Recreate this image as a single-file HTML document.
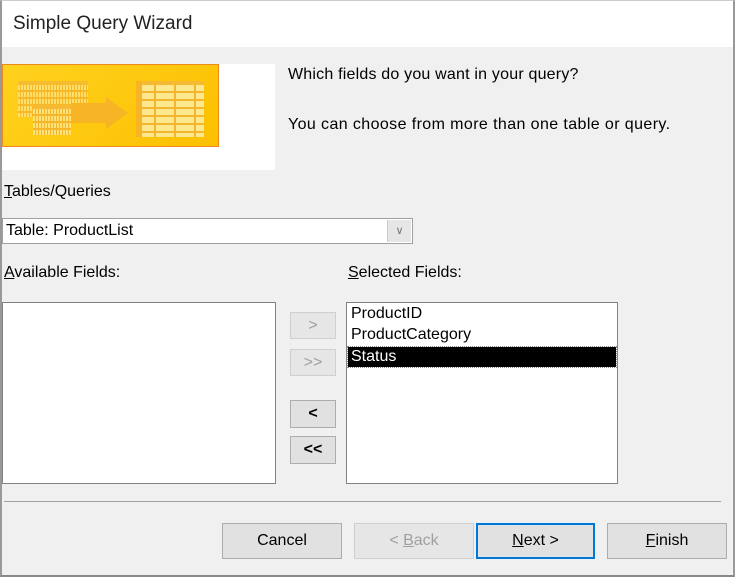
<!DOCTYPE html>
<html><head><meta charset="utf-8"><style>
*{box-sizing:border-box;margin:0;padding:0}
body{width:735px;height:577px;background:#f0f0f0;font-family:"Liberation Sans",sans-serif;font-size:16px;color:#000;position:relative;overflow:hidden}
.a{position:absolute}
.title{left:0;top:0;width:735px;height:47px;background:#fff;font-size:19px;padding:13px 0 0 13px;color:#222}
.frame{left:0;top:0;width:735px;height:577px;border-left:2px solid #999;border-right:2px solid #999;border-bottom:2px solid #888;border-top:1px solid #ccc}
.btn{background:#e1e1e1;border:1px solid #adadad;text-align:center;font-size:16px}
.dis{color:#a0a0a0;border-color:#cfcfcf;background:#e6e6e6}
.lb{background:#fff;border:1px solid #828282}
u{text-decoration:underline}
.tb{background:repeating-linear-gradient(90deg,transparent 0 2px,#f7b52a 2px 3px),repeating-linear-gradient(#fde27a 0 5px,#f7b52a 5px 7px);border-top:4px solid #f6b933}
</style></head><body>
<div class="a title">Simple Query Wizard</div>
<div class="a" style="left:2px;top:64px;width:273px;height:106px;background:#fff"></div>
<div class="a" style="left:2px;top:64px;width:217px;height:83px;background:linear-gradient(135deg,#ffd21f,#fbc000);border:1px solid #f08a1e;overflow:hidden">
 <div class="a tb" style="left:15px;top:16px;width:70px;height:36px;opacity:.85"></div>
 <div class="a tb" style="left:30px;top:40px;width:38px;height:30px"></div>
 <div class="a" style="left:68px;top:38px;width:36px;height:20px;background:#f7b424"></div>
 <div class="a" style="left:103px;top:32px;width:0;height:0;border-top:16px solid transparent;border-bottom:16px solid transparent;border-left:22px solid #f7b424"></div>
 <div class="a tb" style="left:133px;top:16px;width:68px;height:56px;background:repeating-linear-gradient(90deg,#fde890 0 18px,#f5b52c 18px 20px),#fde890;"></div>
 <div class="a" style="left:133px;top:20px;width:68px;height:52px;background:repeating-linear-gradient(transparent 0 6px,#f5b52c 6px 8px)"></div>
 <div class="a" style="left:133px;top:16px;width:6px;height:56px;background:#f7b424"></div>
</div>
<div class="a" style="left:288px;top:66px;letter-spacing:0.2px">Which fields do you want in your query?</div>
<div class="a" style="left:288px;top:116px;letter-spacing:0.4px">You can choose from more than one table or query.</div>
<div class="a" style="left:4px;top:183px"><u>T</u>ables/Queries</div>
<div class="a lb" style="left:2px;top:218px;width:411px;height:26px;border-color:#a0a0a0"><div class="a" style="left:3px;top:3px">Table: ProductList</div>
<div class="a" style="left:384px;top:1px;width:24px;height:22px;background:#e6e6e6;border-left:1px solid #ccc;color:#777;font-size:11px;text-align:center;line-height:22px">&#8744;</div></div>
<div class="a" style="left:4px;top:264px"><u>A</u>vailable Fields:</div>
<div class="a" style="left:348px;top:264px"><u>S</u>elected Fields:</div>
<div class="a lb" style="left:2px;top:302px;width:274px;height:182px"></div>
<div class="a lb" style="left:346px;top:302px;width:272px;height:182px">
 <div class="a" style="left:4px;top:2px">ProductID</div>
 <div class="a" style="left:4px;top:23px">ProductCategory</div>
 <div class="a" style="left:1px;top:44px;width:268px;height:20px;background:#000;color:#fff;padding:1px 0 0 3px;outline:1px dotted #888">Status</div>
</div>
<div class="a btn dis" style="left:290px;top:312px;width:46px;height:27px;line-height:25px">&gt;</div>
<div class="a btn dis" style="left:290px;top:349px;width:46px;height:27px;line-height:25px">&gt;&gt;</div>
<div class="a btn" style="left:290px;top:400px;width:46px;height:28px;line-height:26px;font-weight:bold">&lt;</div>
<div class="a btn" style="left:290px;top:436px;width:46px;height:28px;line-height:26px;font-weight:bold">&lt;&lt;</div>
<div class="a" style="left:4px;top:501px;width:717px;height:1px;background:#a0a0a0"></div>
<div class="a btn" style="left:222px;top:523px;width:120px;height:36px;line-height:34px">Cancel</div>
<div class="a btn dis" style="left:354px;top:523px;width:120px;height:36px;line-height:34px">&lt; <u>B</u>ack</div>
<div class="a btn" style="left:476px;top:523px;width:119px;height:36px;line-height:32px;border:2px solid #0078d7"><u>N</u>ext &gt;</div>
<div class="a btn" style="left:607px;top:523px;width:120px;height:36px;line-height:34px"><u>F</u>inish</div>
<div class="a frame"></div>
</body></html>
